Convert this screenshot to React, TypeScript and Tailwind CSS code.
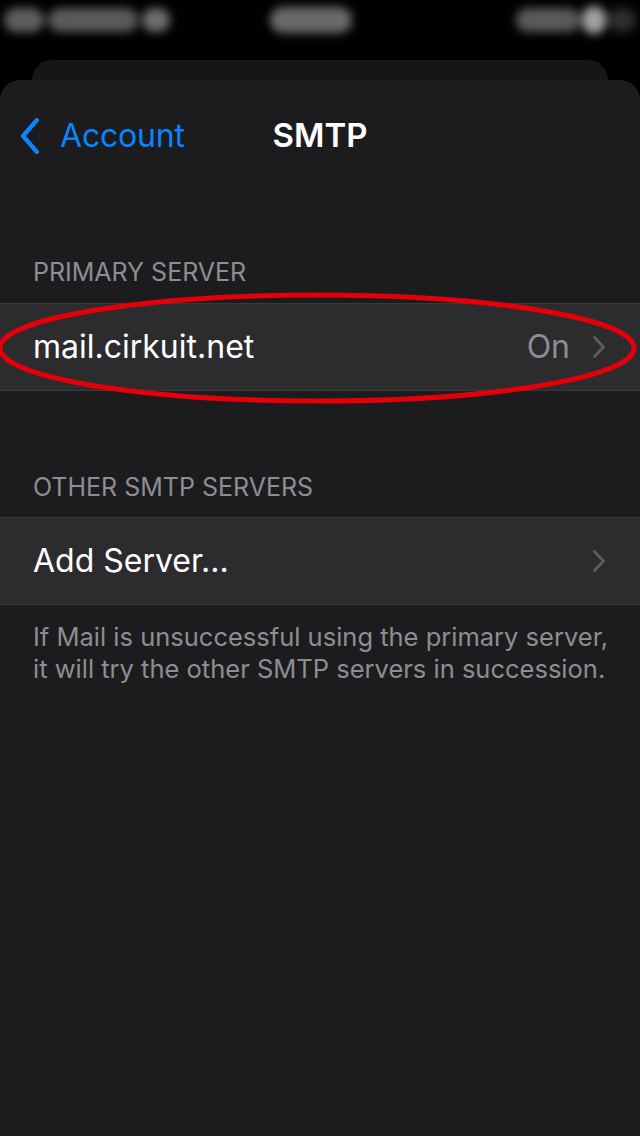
const font = { fontFamily: "Inter, 'Noto Sans', sans-serif" };

function Chevron() {
  return (
    <svg width="14" height="24" viewBox="0 0 14 24" fill="none">
      <path d="M2.5 2.5 L11.5 12 L2.5 21.5" stroke="#5b5b60" strokeWidth="3" strokeLinecap="round" strokeLinejoin="round" />
    </svg>
  );
}

function StatusBar() {
  return (
    <div className="flex h-[44px] items-center px-[4px] pb-[4px] blur-[5px]">
      <div className="flex items-center gap-[4px]">
        <div className="h-[24px] w-[40px] rounded-full bg-[#5e5e5e]" />
        <div className="h-[24px] w-[90px] rounded-full bg-[#5a5a5a]" />
        <div className="h-[24px] w-[28px] rounded-full bg-[#6e6e6e]" />
      </div>
      <div className="ml-[100px] h-[26px] w-[82px] rounded-full bg-[#6a6a6a]" />
      <div className="ml-auto flex items-center gap-[2px]">
        <div className="h-[24px] w-[64px] rounded-full bg-[#5a5a5a]" />
        <div className="h-[28px] w-[24px] rounded-full bg-[#a0a0a0]" />
        <div className="h-[24px] w-[28px] rounded-full bg-[#2e2e2e]" />
      </div>
    </div>
  );
}

export default function App() {
  return (
    <div className="flex h-[1136px] w-[640px] flex-col overflow-hidden bg-black" style={font}>
      <StatusBar />
      <div className="mx-[32px] mt-[16px] h-[40px] rounded-t-[20px] bg-[#161617]" />
      <div className="-mt-[20px] flex flex-1 flex-col rounded-t-[20px] bg-[#1c1c1e]">
        {/* Nav bar */}
        <div className="relative flex h-[112px] items-center">
          <div className="flex items-center pl-[18px] text-[#0a84ff]">
            <svg width="24" height="38" viewBox="0 0 24 38" fill="none">
              <path d="M19 3 L5 19 L19 35" stroke="#0a84ff" strokeWidth="4.2" strokeLinecap="round" strokeLinejoin="round" />
            </svg>
            <span className="ml-[18px] text-[32px] tracking-[-0.2px]">Account</span>
          </div>
          <div className="absolute left-0 right-0 text-center text-[33px] font-semibold text-white">SMTP</div>
        </div>

        <div className="mt-[65px] px-[33px] pb-[16px] text-[25px] uppercase leading-[30px] text-[#8d8d93]">Primary Server</div>
        <div className="relative flex h-[88px] items-center border-y border-[#3a3a3c] bg-[#2c2c2e] pl-[33px] pr-[34px]">
          <span className="flex-1 text-[32px] text-white">mail.cirkuit.net</span>
          <span className="mr-[22px] text-[32px] text-[#8d8d93]">On</span>
          <Chevron />
          <svg className="pointer-events-none absolute -top-[12px] left-0" width="640" height="112" viewBox="0 0 640 112" fill="none">
            <ellipse cx="317" cy="56" rx="317" ry="53" stroke="#e3000b" strokeWidth="5" />
          </svg>
        </div>

        <div className="mt-[81px] px-[33px] pb-[15px] text-[25px] uppercase leading-[30px] text-[#8d8d93]">Other SMTP Servers</div>
        <div className="flex h-[88px] items-center border-y border-[#3a3a3c] bg-[#2c2c2e] pl-[33px] pr-[34px]">
          <span className="flex-1 text-[32px] text-white">Add Server...</span>
          <Chevron />
        </div>
        <p className="whitespace-nowrap px-[33px] pt-[16px] text-[25.5px] leading-[32px] text-[#8d8d93]">
          If Mail is unsuccessful using the primary server,
          <br />
          it will try the other SMTP servers in succession.
        </p>
      </div>
    </div>
  );
}
